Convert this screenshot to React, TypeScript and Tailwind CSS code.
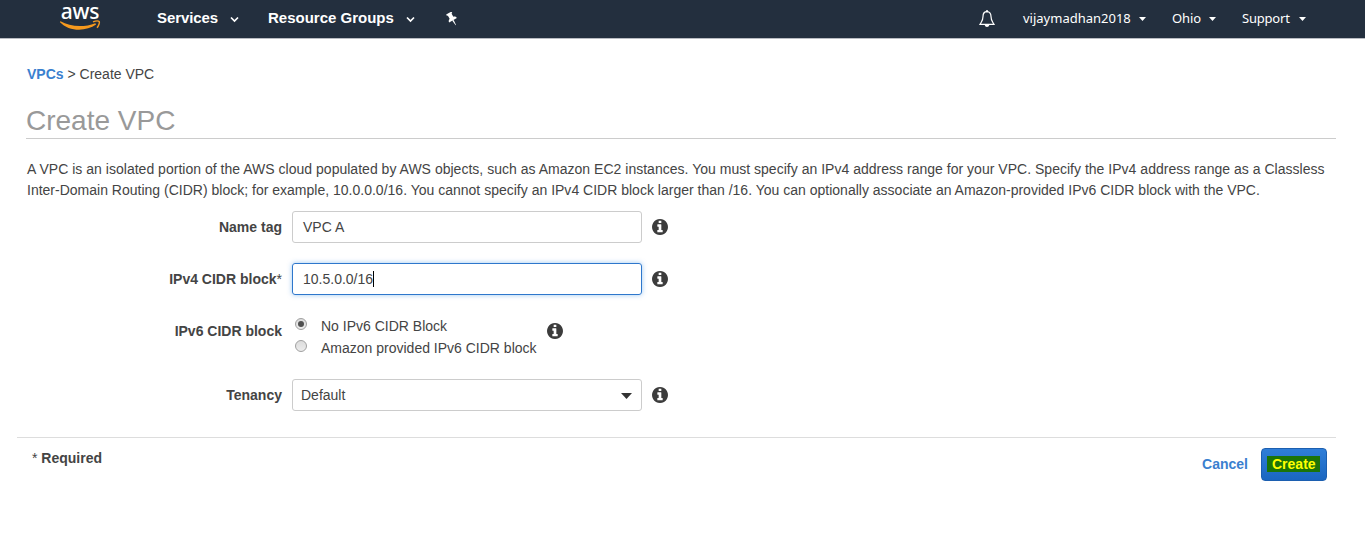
import React from "react";

const Info = () => (
  <svg className="mb-px size-4 shrink-0" viewBox="0 128 1536 1536" fill="#3c3c3c">
    <path d="M1024 1376v-160q0-14-9-23t-23-9h-96V672q0-14-9-23t-23-9H544q-14 0-23 9t-9 23v160q0 14 9 23t23 9h96v320h-96q-14 0-23 9t-9 23v160q0 14 9 23t23 9h448q14 0 23-9t9-23zM896 480V320q0-14-9-23t-23-9H672q-14 0-23 9t-9 23v160q0 14 9 23t23 9h192q14 0 23-9t9-23zm640 416q0 209-103 385.500T1153.500 1561 768 1664t-385.500-103T103 1281.500 0 896t103-385.500T382.500 231 768 128t385.500 103T1433 510.500 1536 896z" />
  </svg>
);

const Chevron = () => (
  <svg className="h-[7px] w-[9px] shrink-0" viewBox="0 0 9 7" fill="none" stroke="#fff" strokeWidth="1.7">
    <path d="M1 1.5 4.5 5 8 1.5" />
  </svg>
);

const Caret = () => (
  <svg className="h-1 w-[7px] shrink-0" viewBox="0 0 7 4" fill="#fff">
    <path d="M0 0h7L3.5 4z" />
  </svg>
);

const Pin = () => (
  <svg className="mt-0.5 ml-[31px] h-[14px] w-[13px]" viewBox="0 0 13 14" fill="#fff">
    <g transform="rotate(-30 6.5 7)">
      <path d="M3.200 0h6.100v1.700h-.9v3.700c1.500.6 2.300 1.500 2.300 3H1.800c0-1.500.8-2.400 2.300-3V1.700h-.9zM5.500 8.400h1.600l-.6 5.600h-.4z" />
    </g>
  </svg>
);

function AwsLogo() {
  return (
    <div className="flex h-[38px] w-[42px] flex-col items-center">
      <span className="h-5 font-['Noto_Sans',sans-serif] text-[21px] leading-[22px] font-medium tracking-[-0.2px] text-white">
        aws
      </span>
      <svg className="h-[11px] w-[42px]" viewBox="0 0 42 11" fill="none" stroke="#f79a1e">
        <path d="M.8 2 1.500 1.300C11 7 25.500 7.500 36.300 3.200l.8 1.400C27 11.800 10 12 .8 2z" fill="#f79a1e" stroke="none" />
        <path d="M34 1.800c2.500-.9 5.500-1 6.200-.3.600 1-.4 4.300-2.200 6.300" strokeWidth="1.400" />
      </svg>
    </div>
  );
}

function Header() {
  return (
    <header className="flex h-[39px] items-start border-b border-[#b9bcc2] bg-[#232f3e] pl-[59px] font-['Liberation_Sans',sans-serif] text-white">
      <AwsLogo />
      <nav className="flex h-9 items-center text-[15px] font-bold">
        <span className="ml-14 w-[61px] tracking-[-0.1px] whitespace-nowrap">Services</span>
        <span className="ml-[12px] flex pt-[3px]"><Chevron /></span>
        <span className="ml-[29px] w-[126px] whitespace-nowrap">Resource Groups</span>
        <span className="ml-[12px] flex pt-[3px]"><Chevron /></span>
        <Pin />
      </nav>
      <div className="mr-[59px] ml-auto flex h-9 items-center font-['Noto_Sans',sans-serif] text-[13px]">
        <svg className="mt-0.5 mr-[28px] h-[18px] w-4" viewBox="0 0 16 18" fill="none" stroke="#fff" strokeWidth="1.200">
          <path d="M8 1.700C5.200 1.700 4 3.800 4 6.500C4 10.500 2.800 11 1 14.300h14C13.200 11 12 10.500 12 6.500C12 3.800 10.800 1.700 8 1.700z" />
          <path d="M7 .3h2v2H7zM5.700 15h4.600c-.3 1.300-1.100 2-2.300 2S6 16.300 5.700 15z" fill="#fff" stroke="none" />
        </svg>
        <span className="w-[108px] whitespace-nowrap">vijaymadhan2018</span>
        <span className="ml-[8px] flex pt-[2px]"><Caret /></span>
        <span className="ml-[26px] w-[28px] tracking-[-0.1px]">Ohio</span>
        <span className="ml-[9px] flex pt-[2px]"><Caret /></span>
        <span className="ml-[26px] w-[49px] tracking-[-0.2px]">Support</span>
        <span className="ml-2 flex pt-[2px]"><Caret /></span>
      </div>
    </header>
  );
}

function Row({ label, required, children }: { label: string; required?: boolean; children: React.ReactNode }) {
  return (
    <div className="flex h-8 items-center">
      <div className="mr-[10px] w-[265px] text-right whitespace-nowrap">
        <span className="font-bold">{label}</span>
        {required && "*"}
      </div>
      {children}
    </div>
  );
}

function Radio({ label, checked }: { label: string; checked?: boolean }) {
  return (
    <div className="flex h-[22px] items-center">
      <span className="mr-[14px] mb-1 ml-[3px] flex size-3 items-center justify-center rounded-full border border-[#a0a0a0] bg-gradient-to-b from-[#dcdcdc] to-[#ececec]">
        {checked && <span className="size-1.5 rounded-full bg-[#505050]" />}
      </span>
      <span className="whitespace-nowrap">{label}</span>
    </div>
  );
}

export default function App() {
  return (
    <div className="h-[535px] w-[1365px] overflow-hidden bg-white font-['Liberation_Sans',sans-serif] text-[14px] leading-5 text-[#444]">
      <Header />
      <main className="pr-[29px] pl-[17px]">
        <div className="pt-[25px] pl-[10px]">
          <span className="font-bold text-[#3a80cf]">VPCs</span> &gt; Create VPC
        </div>
        <h1 className="mt-[17px] ml-[9px] h-[38px] border-b border-[#ccc] text-[28px] leading-[40px] text-[#999]">Create VPC</h1>
        <p className="mt-5 ml-[10px] text-[14px] leading-[21px] whitespace-nowrap">
          <span className="tracking-[0.018px]">
            A VPC is an isolated portion of the AWS cloud populated by AWS objects, such as Amazon EC2 instances. You must specify an IPv4 address range for your VPC. Specify the IPv4 address range as a Classless
          </span>
          <br />
          <span className="tracking-[0.005px]">
            Inter-Domain Routing (CIDR) block; for example, 10.0.0.0/16. You cannot specify an IPv4 CIDR block larger than /16. You can optionally associate an Amazon-provided IPv6 CIDR block with the VPC.
          </span>
        </p>
        <form className="mt-[10px] flex flex-col">
          <Row label="Name tag">
            <div className="mr-[10px] flex h-8 w-[350px] items-center rounded-[3px] border border-[#ccc] pl-[10px]">VPC A</div>
            <Info />
          </Row>
          <div className="mt-5">
            <Row label="IPv4 CIDR block" required>
              <div className="mr-[10px] flex h-8 w-[350px] items-center rounded-[3px] border border-[#2e77cc] pl-[10px] shadow-[0_0_5px_rgba(60,145,230,0.5)]">
                10.5.0.0/16
                <span className="h-4 w-px bg-black" />
              </div>
              <Info />
            </Row>
          </div>
          <div className="mt-5">
            <Row label="IPv6 CIDR block">
              <div className="mt-3 mr-[10px] w-[245px]">
                <Radio label="No IPv6 CIDR Block" checked />
                <Radio label="Amazon provided IPv6 CIDR block" />
              </div>
              <Info />
            </Row>
          </div>
          <div className="mt-8">
            <Row label="Tenancy">
              <div className="mr-[10px] flex h-8 w-[350px] items-center justify-between rounded-[3px] border border-[#ccc] pr-[9px] pl-2">
                Default
                <svg className="mt-0.5 h-1.5 w-[11px]" viewBox="0 0 11 6" fill="#333">
                  <path d="M0 0h11L5.500 6z" />
                </svg>
              </div>
              <Info />
            </Row>
          </div>
        </form>
        <footer className="mt-[26px] flex justify-between border-t border-[#ddd] pl-[15px]">
          <div className="mt-[10px]">
            * <span className="font-bold">Required</span>
          </div>
          <div className="mt-[10px] mr-[9px] flex items-center gap-[13px] font-bold">
            <span className="-mt-0.5 text-[#3a80cf]">Cancel</span>
            <div className="flex h-[33px] w-[66px] items-start rounded-[4px] border border-[#1c5fb0] bg-gradient-to-b from-[#2f7ed8] to-[#1a66c0] pt-[7px] pl-[5px]">
              <span className="h-4 w-[53px] bg-[#1b7408] pl-[5px] leading-4 text-[#ffff00]">Create</span>
            </div>
          </div>
        </footer>
      </main>
    </div>
  );
}
